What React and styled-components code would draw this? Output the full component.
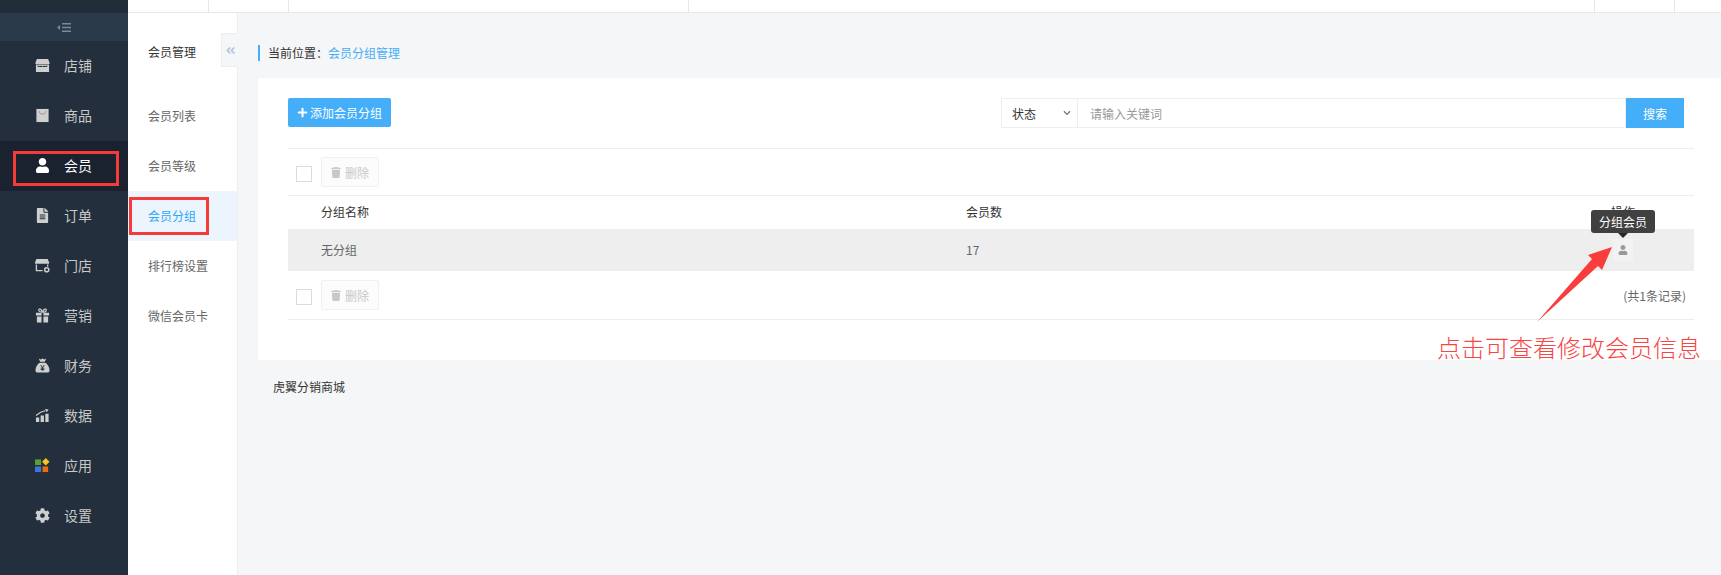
import React from 'react';
import styled, { createGlobalStyle } from 'styled-components';
import { FaUser, FaFileAlt, FaCog, FaTrash, FaPlus, FaAngleDoubleLeft, FaChevronDown } from 'react-icons/fa';

const GlobalStyle = createGlobalStyle`
    html, body {
        margin: 0;
        height: 100%;
        overflow: hidden;
        background: #f5f6f8;
        font-family: "Noto Sans CJK SC", "Liberation Sans", sans-serif;
        font-size: 12px;
        color: #333;
    }
    * { box-sizing: border-box; }
`;

const Page = styled.div`
    position: relative;
    display: flex;
    width: 1721px;
    height: 575px;
    overflow: hidden;
`;

const Sidebar = styled.aside`
    width: 128px;
    flex: none;
    background: #232f3c;
`;
const SideTop = styled.div`
    height: 13px;
    background: #202c38;
`;
const SideToggle = styled.div`
    height: 28px;
    display: flex;
    align-items: center;
    justify-content: center;
    background: #2b3a4a;
`;
const SideItem = styled.div`
    height: 50px;
    display: flex;
    align-items: center;
    padding-bottom: 2px;
    color: ${(p) => (p.$active ? '#fff' : '#c8c8c8')};
    background: ${(p) => (p.$active ? '#1a2230' : 'transparent')};
    font-size: 14px;
`;
const SideIcon = styled.span`
    width: 64px;
    flex: none;
    padding-left: 35px;
    display: flex;
    align-items: center;
    color: ${(p) => (p.$active ? '#fff' : '#cfcfcf')};
    svg { display: block; width: 15px; height: 15px; }
`;

const Main = styled.div`
    flex: 1;
    display: flex;
    flex-direction: column;
    min-width: 0;
`;
const TopBar = styled.header`
    height: 13px;
    flex: none;
    display: flex;
    background: #fff;
    border-bottom: 1px solid #e8e8e8;
`;
const TopCell = styled.div`
    width: ${(p) => p.$w}px;
    flex: ${(p) => (p.$w ? 'none' : 1)};
    border-right: ${(p) => (p.$last ? 'none' : '1px solid #e8e8e8')};
`;
const Body = styled.div`
    flex: 1;
    display: flex;
`;
const SubNav = styled.nav`
    position: relative;
    width: 110px;
    flex: none;
    background: #fff;
    border-right: 1px solid #eceef0;
`;
const SubTitle = styled.div`
    height: 78px;
    padding: 30px 0 0 20px;
    line-height: 17px;
    color: #333;
`;
const SubItem = styled.div`
    height: 50px;
    display: flex;
    align-items: center;
    padding: 0 0 2px 20px;
    color: ${(p) => (p.$active ? '#2da7f5' : '#666')};
    background: ${(p) => (p.$active ? '#ecf5fd' : 'transparent')};
`;
const Collapse = styled.div`
    position: absolute;
    top: 20px;
    right: -1px;
    width: 17px;
    height: 34px;
    display: flex;
    align-items: center;
    justify-content: center;
    background: #f5f6f8;
    border: 1px solid #eceef0;
    border-right: none;
    color: #b4c6d8;
    font-size: 11px;
`;

const Content = styled.main`
    flex: 1;
    min-width: 0;
    padding-top: 32px;
    padding-left: 20px;
`;
const Crumb = styled.div`
    height: 16px;
    border-left: 2px solid #45aef8;
    padding-left: 8px;
    line-height: 16px;
    color: #333;
    span { color: #45aef8; }
`;
const Panel = styled.section`
    margin-top: 17px;
    height: 282px;
    background: #fff;
    padding: 20px 27px 0 30px;
`;
const Toolbar = styled.div`
    display: flex;
    justify-content: space-between;
    align-items: flex-start;
    padding-right: 10px;
    border-bottom: 1px solid #eee;
    height: 51px;
`;
const AddButton = styled.button`
    height: 29px;
    width: 103px;
    padding: 0;
    display: flex;
    align-items: center;
    justify-content: center;
    gap: 2px;
    border: none;
    border-radius: 2px;
    background: #45aef8;
    color: #fff;
    font: inherit;
    svg { width: 11px; height: 11px; }
`;
const Search = styled.div`
    display: flex;
    height: 30px;
`;
const StateSelect = styled.div`
    width: 77px;
    display: flex;
    align-items: center;
    justify-content: space-between;
    padding: 0 6px 0 10px;
    border: 1px solid #eee;
    color: #333;
    svg { width: 8px; height: 8px; color: #6b7684; }
`;
const Keyword = styled.div`
    width: 548px;
    display: flex;
    align-items: center;
    padding-left: 12px;
    border: 1px solid #eee;
    border-left: none;
    color: #999;
`;
const SearchButton = styled.div`
    width: 58px;
    display: flex;
    align-items: center;
    justify-content: center;
    background: #45aef8;
    color: #fff;
`;

const ActionRow = styled.div`
    height: ${(p) => p.$h}px;
    display: flex;
    align-items: center;
    padding-left: 8px;
    border-bottom: 1px solid #eee;
`;
const Check = styled.span`
    width: 16px;
    height: 16px;
    flex: none;
    border: 1px solid #dcdcdc;
    background: #fff;
    margin-top: 4px;
`;
const DeleteButton = styled.div`
    width: 58px;
    height: 30px;
    margin-left: 9px;
    display: flex;
    align-items: center;
    justify-content: center;
    gap: 4px;
    border: 1px solid #f0f0f0;
    border-radius: 2px;
    background: #fcfcfc;
    color: #c8c8c8;
    svg { width: 10px; height: 11px; }
`;
const Row = styled.div`
    display: grid;
    grid-template-columns: 645px 645px 1fr;
    align-items: center;
    height: ${(p) => p.$h}px;
    padding: 0 0 2px 33px;
    background: ${(p) => (p.$shade ? '#eee' : 'transparent')};
    color: ${(p) => (p.$shade ? '#666' : '#333')};
`;
const OpCell = styled.div`
    display: flex;
    justify-content: center;
    width: 24px;
`;
const UserButton = styled.div`
    width: 20px;
    height: 22px;
    margin-top: 2px;
    display: flex;
    align-items: center;
    justify-content: center;
    border-radius: 2px;
    background: #f2f2f2;
    color: #999;
    svg { width: 10px; height: 10px; }
`;
const Total = styled.div`
    margin-left: auto;
    padding-right: 8px;
    color: #666;
`;
const Footer = styled.div`
    padding: 18px 0 0 15px;
    line-height: 17px;
    color: #333;
`;

const Tooltip = styled.div`
    position: absolute;
    left: 1591px;
    top: 210px;
    width: 64px;
    height: 23px;
    display: flex;
    align-items: center;
    justify-content: center;
    border-radius: 3px;
    background: #404040;
    color: #fff;
    &::after {
        content: '';
        position: absolute;
        left: 27px;
        top: 23px;
        border: 5px solid transparent;
        border-top-color: #262626;
        border-bottom: none;
    }
`;
const RedBox = styled.div`
    position: absolute;
    left: ${(p) => p.$x}px;
    top: ${(p) => p.$y}px;
    width: ${(p) => p.$w}px;
    height: ${(p) => p.$h}px;
    border: 3px solid #f53a3a;
`;
const Arrow = styled.svg`
    position: absolute;
    left: 1530px;
    top: 240px;
`;
const Note = styled.div`
    position: absolute;
    left: 1437px;
    top: 332px;
    font-size: 24px;
    line-height: 30px;
    font-weight: 300;
    color: #f94444;
    white-space: nowrap;
`;

const StoreIcon = () => (
    <svg viewBox="0 0 16 16"><path fill="currentColor" d="M2 1h12l1.500 4v1.500H.5V5zM1 7h14v8H1z" /><path fill="#232f3c" d="M3 7.500c1 1.600 2.500 1.600 3.400.4.8 1.200 2.400 1.200 3.200 0 .9 1.200 2.400 1.200 3.400-.4v2H3z" /></svg>
);
const BagIcon = () => (
    <svg viewBox="0 0 16 16"><path fill="currentColor" d="M1.500 1h13v14h-13z" /><path fill="none" stroke="#8a8a8a" strokeWidth="1" d="M4.500 3.500c.5 4 6.500 4 7 0" /></svg>
);
const ShopIcon = () => (
    <svg viewBox="0 0 16 16"><path fill="currentColor" d="M1.500 1h12l1.500 3.500v1.500H0V4.500z" /><path fill="none" stroke="currentColor" strokeWidth="1.400" d="M1.500 7v6.500H8M13.500 7v2" /><circle cx="12.500" cy="12.500" r="2.200" fill="none" stroke="currentColor" strokeWidth="1.600" /></svg>
);
const GiftIcon = () => (
    <svg viewBox="0 0 16 16"><path fill="currentColor" d="M1 5h6v3H1zM9 5h6v3H9zM2 9h5v6.500H2zM9 9h5v6.500H9z" /><path fill="none" stroke="currentColor" strokeWidth="1.300" d="M8 4.500C6 4.500 4 3.500 4 2s3-1.500 4 2.500c1-4 4-4 4-2.500s-2 2.500-4 2.500z" /></svg>
);
const MoneyIcon = () => (
    <svg viewBox="0 0 16 16"><path fill="currentColor" d="M4 .5l2 1 2-1 2 1 2-1-1.500 3.500h-5zM5 5h6c2.500 1.500 4.500 5 4.500 8 0 1.500-1 2.500-2.500 2.500H3C1.500 15.500.5 14.500.5 13 .5 10 2.500 6.500 5 5z" /><path fill="none" stroke="#232f3c" strokeWidth="1" d="M6 7.500l2 2.500 2-2.500M8 10v3.500M6 10.800h4M6 12.400h4" /></svg>
);
const ChartIcon = () => (
    <svg viewBox="0 0 16 16"><path fill="currentColor" d="M1 10h3.500v5H1zM6 8h3.500v7H6zM11 6h3.500v9H11z" /><path fill="none" stroke="currentColor" strokeWidth="1.200" d="M1 8l5-3.500 5-1.500" /><path fill="currentColor" d="M10.500 1l4 .500-2 3z" /></svg>
);
const AppsIcon = () => (
    <svg viewBox="0 0 16 16"><path fill="#5aa02c" d="M0 1.500h6.500V7.500H0z" /><path fill="#f5c228" d="M11.500 0l4 4-4 4-4-4z" /><path fill="#3f74d8" d="M0 9h6.500v6H0z" /><path fill="#ee6c0e" d="M8 9h6v6H8z" /></svg>
);

const menu = [
    { label: '店铺', icon: <StoreIcon /> },
    { label: '商品', icon: <BagIcon /> },
    { label: '会员', icon: <FaUser />, active: true },
    { label: '订单', icon: <FaFileAlt /> },
    { label: '门店', icon: <ShopIcon /> },
    { label: '营销', icon: <GiftIcon /> },
    { label: '财务', icon: <MoneyIcon /> },
    { label: '数据', icon: <ChartIcon /> },
    { label: '应用', icon: <AppsIcon /> },
    { label: '设置', icon: <FaCog /> },
];
const subMenu = ['会员列表', '会员等级', '会员分组', '排行榜设置', '微信会员卡'];

const App = () => {
    return (
        <Page>
            <GlobalStyle />
            <Sidebar>
                <SideTop />
                <SideToggle>
                    <svg width="14" height="9" viewBox="0 0 14 9"><path fill="#7d8a96" d="M5 0h9v1.500H5zM5 3.700h9v1.500H5zM5 7.500h9V9H5zM0 4.500l3-2.500v5z" /></svg>
                </SideToggle>
                {menu.map((item) => (
                    <SideItem key={item.label} $active={item.active}>
                        <SideIcon $active={item.active}>{item.icon}</SideIcon>
                        {item.label}
                    </SideItem>
                ))}
            </Sidebar>
            <Main>
                <TopBar>
                    <TopCell $w={81} />
                    <TopCell $w={80} />
                    <TopCell $w={400} />
                    <TopCell $w={906} />
                    <TopCell $w={80} />
                    <TopCell $last />
                </TopBar>
                <Body>
                    <SubNav>
                        <SubTitle>会员管理</SubTitle>
                        <Collapse><FaAngleDoubleLeft /></Collapse>
                        {subMenu.map((label) => (
                            <SubItem key={label} $active={label === '会员分组'}>{label}</SubItem>
                        ))}
                    </SubNav>
                    <Content>
                        <Crumb>当前位置：<span>会员分组管理</span></Crumb>
                        <Panel>
                            <Toolbar>
                                <AddButton><FaPlus />添加会员分组</AddButton>
                                <Search>
                                    <StateSelect>状态<FaChevronDown /></StateSelect>
                                    <Keyword>请输入关键词</Keyword>
                                    <SearchButton>搜索</SearchButton>
                                </Search>
                            </Toolbar>
                            <ActionRow $h={47}>
                                <Check />
                                <DeleteButton><FaTrash />删除</DeleteButton>
                            </ActionRow>
                            <Row $h={33}>
                                <span>分组名称</span>
                                <span>会员数</span>
                                <OpCell>操作</OpCell>
                            </Row>
                            <Row $h={42} $shade>
                                <span>无分组</span>
                                <span>17</span>
                                <OpCell><UserButton><FaUser /></UserButton></OpCell>
                            </Row>
                            <ActionRow $h={49}>
                                <Check />
                                <DeleteButton><FaTrash />删除</DeleteButton>
                                <Total>(共1条记录)</Total>
                            </ActionRow>
                        </Panel>
                        <Footer>虎翼分销商城</Footer>
                    </Content>
                </Body>
            </Main>
            <RedBox $x={13} $y={151} $w={106} $h={35} />
            <RedBox $x={129} $y={197} $w={80} $h={38} />
            <Tooltip>分组会员</Tooltip>
            <Arrow width="90" height="90" viewBox="0 0 90 90">
                <path fill="#f93c3c" d="M7 82L62 19 58 15 82 7 72 30 68 26z" />
            </Arrow>
            <Note>点击可查看修改会员信息</Note>
        </Page>
    );
};

export default App;
